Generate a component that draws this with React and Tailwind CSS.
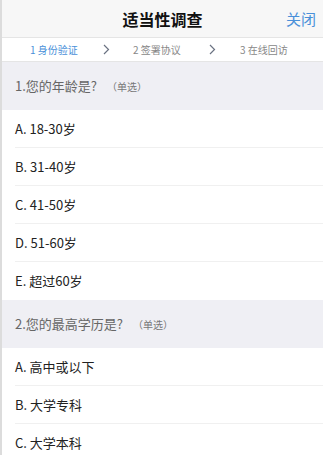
import React from "react"

const font = { fontFamily: '"Noto Sans CJK SC", "Liberation Sans", sans-serif' }

function Chevron() {
  return (
    <svg width="7" height="11" viewBox="0 0 7 11" className="text-gray-500">
      <path d="M1 1l4.5 4.5L1 10" fill="none" stroke="currentColor" strokeWidth="1.2" />
    </svg>
  )
}

function Question({ title, options }) {
  return (
    <div>
      <div className="h-[48px] bg-[#efeff4] flex items-center pl-[13px] text-[13px] text-[#666]">
        <span>{title}</span>
        <span className="ml-[10px] text-[10px] text-[#777]">（单选）</span>
      </div>
      {options.map((o, i) => (
        <div key={o} className="h-[38px] bg-white pl-[13px]">
          <div className={"h-full flex items-center text-[13px] text-[#222] " + (i < options.length - 1 ? "border-b border-[#f0f0f0]" : "")}>
            {o}
          </div>
        </div>
      ))}
    </div>
  )
}

export default function App() {
  return (
    <div style={font} className="w-[323px] h-[455px] overflow-hidden bg-white border-l-2 border-[#dcdcdc]">
      {/* top bar */}
      <div className="h-[37px] bg-[#f7f7f7] flex items-center relative">
        <div className="flex-1 text-center text-[16px] font-bold text-[#111]">适当性调查</div>
        <div className="absolute right-[7px] top-[8px] text-[15px] text-[#4a90d9]">关闭</div>
      </div>
      {/* steps */}
      <div className="h-[25px] bg-white border-t border-b border-[#e5e5e5] flex items-center text-[10px] text-[#888] pl-[28px]">
        <div className="w-[50px] text-[#4a90d9]">1 身份验证</div>
        <div className="w-[53px] flex justify-center"><Chevron /></div>
        <div className="w-[52px]">2 签署协议</div>
        <div className="w-[55px] flex justify-center"><Chevron /></div>
        <div>3 在线回访</div>
      </div>
      <Question title="1.您的年龄是?" options={["A. 18-30岁", "B. 31-40岁", "C. 41-50岁", "D. 51-60岁", "E. 超过60岁"]} />
      <Question title="2.您的最高学历是?" options={["A. 高中或以下", "B. 大学专科", "C. 大学本科"]} />
    </div>
  )
}
